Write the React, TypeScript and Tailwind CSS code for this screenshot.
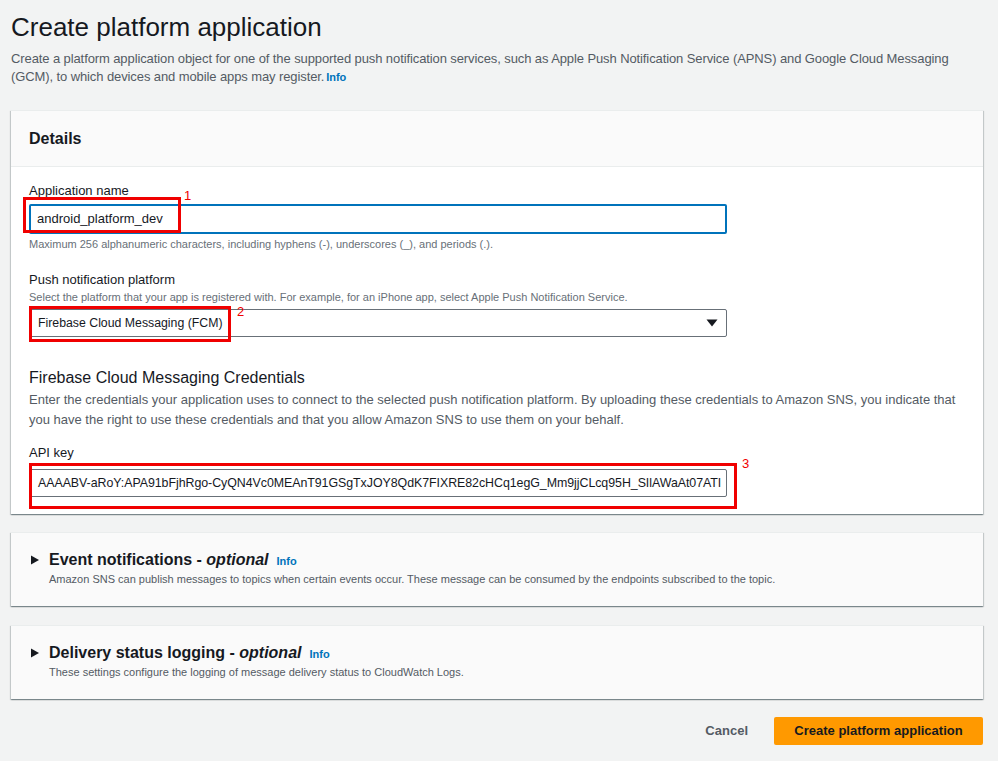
import React from "react";

const font = { fontFamily: '"Liberation Sans", Arial, sans-serif' };

function Info({ className = "" }: { className?: string }) {
  return <span className={`text-[11px] font-bold text-[#0073bb] ${className}`}>Info</span>;
}

function CollapsedCard({ title, desc }: { title: string; desc: string }) {
  return (
    <section className="bg-[#fafafa] border-t border-[#eaeded] shadow-[0_1px_1px_0_rgba(0,28,36,0.3),1px_1px_1px_0_rgba(0,28,36,0.15),-1px_1px_1px_0_rgba(0,28,36,0.15)] pl-[19px] pt-[16px] pb-[20px]">
      <div className="flex items-center">
        <svg width="10" height="10" viewBox="0 0 10 10" className="mr-[9px]">
          <path d="M1 0.5 L9 5 L1 9.5 Z" fill="#16191f" />
        </svg>
        <h2 className="text-[16px] leading-[22px] font-bold text-[#16191f]">
          {title} - <i className="font-bold">optional</i>
        </h2>
        <Info className="ml-[8px] mt-[2px]" />
      </div>
      <p className="ml-[19px] mt-px text-[11px] leading-[14px] text-[#545b64]">{desc}</p>
    </section>
  );
}

export default function App() {
  return (
    <div className="min-h-[761px] bg-[#f2f3f3] pl-[11px] pr-[15px] pt-[10px]" style={font}>
      <h1 className="text-[26px] leading-[34px] text-[#16191f]">Create platform application</h1>
      <p className="mt-[6px] text-[13px] leading-[18px] text-[#545b64] tracking-[-0.1px]">
        Create a platform application object for one of the supported push notification services, such as Apple Push Notification Service (APNS) and Google Cloud Messaging (GCM), to which devices and mobile apps may register.
        <Info className="ml-[2px]" />
      </p>

      {/* Details */}
      <section className="mt-[24px] bg-white border-t border-[#eaeded] shadow-[0_1px_1px_0_rgba(0,28,36,0.3),1px_1px_1px_0_rgba(0,28,36,0.15),-1px_1px_1px_0_rgba(0,28,36,0.15)]">
        <div className="h-[56px] bg-[#fafafa] border-b border-[#eaeded] flex items-center pl-[18px]">
          <h2 className="text-[16px] font-bold text-[#16191f]">Details</h2>
        </div>
        <div className="pl-[18px] pr-[10px] pt-[15px] pb-[17px] text-[#16191f]">
          <label className="block text-[13px] leading-[18px]">Application name</label>
          <div className="relative mt-[4px] w-[698px]">
            <div className="h-[30px] border-2 border-[#0073bb] rounded-[2px] flex items-center pl-[6px] text-[13px]">
              android_platform_dev
            </div>
            <div className="absolute left-[-6px] top-[-7px] w-[158px] h-[36px] border-[3px] border-[#f00000]" />
            <span className="absolute left-[155px] top-[-16px] text-[13px] leading-[16px] text-[#f00000]">1</span>
          </div>
          <p className="mt-[3px] text-[11px] leading-[14px] text-[#687078]">
            Maximum 256 alphanumeric characters, including hyphens (-), underscores (_), and periods (.).
          </p>

          <label className="block mt-[20px] text-[13px] leading-[18px]">Push notification platform</label>
          <p className="mt-px text-[11px] leading-[14px] text-[#687078]">
            Select the platform that your app is registered with. For example, for an iPhone app, select Apple Push Notification Service.
          </p>
          <div className="relative mt-[5px] w-[698px]">
            <div className="h-[28px] border border-[#687078] rounded-[2px] flex items-center justify-between pl-[8px] pr-[8px] text-[12.3px]">
              <span>Firebase Cloud Messaging (FCM)</span>
              <svg width="12" height="8" viewBox="0 0 12 8">
                <path d="M0.5 0.5 H11.5 L6 7.5 Z" fill="#16191f" />
              </svg>
            </div>
            <div className="absolute left-0 top-[-3px] w-[202px] h-[36px] border-[3px] border-[#f00000]" />
            <span className="absolute left-[208px] top-[-5px] text-[13px] leading-[16px] text-[#f00000]">2</span>
          </div>

          <h3 className="mt-[30px] text-[16px] leading-[22px]">Firebase Cloud Messaging Credentials</h3>
          <p className="mt-px text-[13px] leading-[20px] text-[#545b64]">
            Enter the credentials your application uses to connect to the selected push notification platform. By uploading these credentials to Amazon SNS, you indicate that you have the right to use these credentials and that you allow Amazon SNS to use them on your behalf.
          </p>

          <label className="block mt-[14px] text-[13px] leading-[18px]">API key</label>
          <div className="relative mt-[7px] w-[698px]">
            <div className="h-[28px] border border-[#687078] rounded-[2px] flex items-center pl-[8px] pr-[4px] text-[12.4px] tracking-[-0.05px] overflow-hidden whitespace-nowrap">
              AAAABV-aRoY:APA91bFjhRgo-CyQN4Vc0MEAnT91GSgTxJOY8QdK7FIXRE82cHCq1egG_Mm9jjCLcq95H_SIlAWaAt07ATI
            </div>
            <div className="absolute left-0 top-[-6px] w-[708px] h-[46px] border-[3px] border-[#f00000]" />
            <span className="absolute left-[713px] top-[-13px] text-[13px] leading-[16px] text-[#f00000]">3</span>
          </div>
        </div>
      </section>

      <div className="mt-[18px]">
        <CollapsedCard
          title="Event notifications"
          desc="Amazon SNS can publish messages to topics when certain events occur. These message can be consumed by the endpoints subscribed to the topic."
        />
      </div>
      <div className="mt-[19px]">
        <CollapsedCard
          title="Delivery status logging"
          desc="These settings configure the logging of message delivery status to CloudWatch Logs."
        />
      </div>

      <div className="mt-[18px] flex justify-end items-center">
        <button className="text-[13px] font-bold text-[#545b64] mr-[26px]">Cancel</button>
        <button className="h-[28px] w-[209px] bg-[#ff9900] rounded-[2px] text-[13px] font-bold text-[#16191f]">
          Create platform application
        </button>
      </div>
    </div>
  );
}
